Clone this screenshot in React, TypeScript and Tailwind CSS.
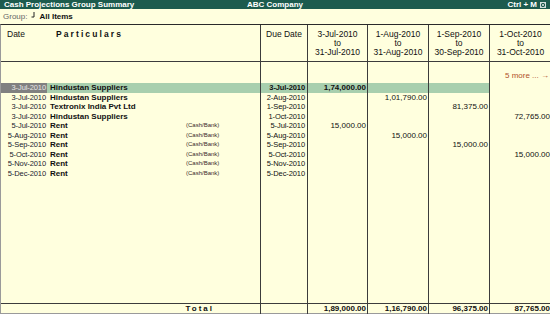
import React from "react";

const COLS = "grid grid-cols-[260px_47px_60px_61px_61px_61px]";

const periods = [
  { from: "3-Jul-2010", to: "31-Jul-2010" },
  { from: "1-Aug-2010", to: "31-Aug-2010" },
  { from: "1-Sep-2010", to: "30-Sep-2010" },
  { from: "1-Oct-2010", to: "31-Oct-2010" },
];

const rows = [
  { date: "3-Jul-2010", name: "Hindustan Suppliers", note: "", due: "3-Jul-2010", amt: ["1,74,000.00", "", "", ""], bold: true, sel: true },
  { date: "3-Jul-2010", name: "Hindustan Suppliers", note: "", due: "2-Aug-2010", amt: ["", "1,01,790.00", "", ""] },
  { date: "3-Jul-2010", name: "Textronix India Pvt Ltd", note: "", due: "1-Sep-2010", amt: ["", "", "81,375.00", ""] },
  { date: "3-Jul-2010", name: "Hindustan Suppliers", note: "", due: "1-Oct-2010", amt: ["", "", "", "72,765.00"] },
  { date: "5-Jul-2010", name: "Rent", note: "(Cash/Bank)", due: "5-Jul-2010", amt: ["15,000.00", "", "", ""] },
  { date: "5-Aug-2010", name: "Rent", note: "(Cash/Bank)", due: "5-Aug-2010", amt: ["", "15,000.00", "", ""] },
  { date: "5-Sep-2010", name: "Rent", note: "(Cash/Bank)", due: "5-Sep-2010", amt: ["", "", "15,000.00", ""] },
  { date: "5-Oct-2010", name: "Rent", note: "(Cash/Bank)", due: "5-Oct-2010", amt: ["", "", "", "15,000.00"] },
  { date: "5-Nov-2010", name: "Rent", note: "(Cash/Bank)", due: "5-Nov-2010", amt: ["", "", "", ""] },
  { date: "5-Dec-2010", name: "Rent", note: "(Cash/Bank)", due: "5-Dec-2010", amt: ["", "", "", ""] },
];

const totals = ["1,89,000.00", "1,16,790.00", "96,375.00", "87,765.00"];

const line = "border-r border-[#3c3c3c]";

export default function App() {
  return (
    <div
      className="w-[550px] h-[314px] flex flex-col bg-[#ffffde] text-[#111] overflow-hidden"
      style={{ fontFamily: '"Liberation Sans", Arial, sans-serif' }}
    >
      {/* Title bar */}
      <div className="h-[9px] bg-[#1d5b4e] text-white text-[8px] font-bold leading-[9px] grid grid-cols-[1fr_auto_1fr] px-[4px]">
        <span>Cash Projections Group Summary</span>
        <span>ABC Company</span>
        <div className="flex justify-end items-center gap-[3px]">
          <span>Ctrl + M</span>
          <span className="w-[6px] h-[6px] border border-white/80 flex items-center justify-center">
            <svg viewBox="0 0 6 6" className="w-[4px] h-[4px]">
              <path d="M0.5 0.5 L5.5 5.5 M5.5 0.5 L0.5 5.5" stroke="white" strokeWidth="1" />
            </svg>
          </span>
        </div>
      </div>

      {/* Group row */}
      <div className="h-[15px] flex items-center px-[3px] text-[8px]">
        <span className="text-[#666]">Group:</span>
        <svg viewBox="0 0 4 6" className="w-[4px] h-[6px] ml-[4px] mb-[4px]">
          <path d="M3 0 V5 H0.5" stroke="#222" strokeWidth="1" fill="none" />
        </svg>
        <span className="font-bold ml-[4px]">All Items</span>
      </div>

      {/* Table */}
      <div className="flex-1 flex flex-col border-t border-[#2a2a2a] border-l border-l-[#9a9a9a] border-b border-b-[#9a9a9a]">
        {/* Header */}
        <div className={`${COLS} h-[37px] border-b border-[#3c3c3c] text-[8.5px] leading-[9px]`}>
          <div className={`${line} flex pt-[5px] pl-[6px]`}>
            <span>Date</span>
            <span className="ml-[31px] font-bold tracking-[2.1px]">Particulars</span>
          </div>
          <div className={`${line} text-center pt-[5px]`}>Due Date</div>
          {periods.map((p, i) => (
            <div key={i} className={`${i < 3 ? line : ""} text-center pt-[5px] flex flex-col`}>
              <span>{p.from}</span>
              <span>to</span>
              <span>{p.to}</span>
            </div>
          ))}
        </div>

        {/* Body */}
        <div className="flex-1 flex flex-col">
          <div className={`${COLS} h-[21px]`}>
            <div className={line} />
            <div className={line} />
            <div className={line} />
            <div className={line} />
            <div className={line} />
            <div className="flex items-end justify-end pb-[1px] pr-[2px] text-[8px] text-[#b0522a]">
              5 more ... →
            </div>
          </div>

          {rows.map((r, ri) => {
            const bg = r.sel ? "bg-[#a8cfae]" : "";
            return (
              <div key={ri} className={`${COLS} h-[9.5px] text-[8px] leading-[9.5px]`}>
                <div className={`${line} ${bg} flex whitespace-nowrap`}>
                  <span
                    className={`w-[46px] text-right pr-[1px] text-[7.5px] tracking-[-0.1px] ${
                      r.sel ? "bg-[#808080] text-[#e6e6e6]" : "text-[#1b1b2e]"
                    }`}
                  >
                    {r.date}
                  </span>
                  <span className="w-[139px] pl-[3px] font-bold">{r.name}</span>
                  <span className="text-[6px] text-[#3a2a2a]">{r.note}</span>
                </div>
                <div className={`${line} ${bg} text-right pr-[2px] text-[7.5px] tracking-[-0.1px] ${r.bold ? "font-bold" : ""}`}>
                  {r.due}
                </div>
                {r.amt.map((a, ai) => (
                  <div
                    key={ai}
                    className={`${ai < 3 ? line : ""} ${ai < 3 ? bg : ""} text-right pr-[1px] ${
                      r.bold ? "font-bold" : ""
                    }`}
                  >
                    {a}
                  </div>
                ))}
              </div>
            );
          })}

          <div className={`${COLS} flex-1`}>
            <div className={line} />
            <div className={line} />
            <div className={line} />
            <div className={line} />
            <div className={line} />
            <div />
          </div>
        </div>

        {/* Total */}
        <div className={`${COLS} h-[10px] border-t border-[#3c3c3c] text-[8px] leading-[10px] font-bold`}>
          <div className={`${line} text-right pr-[46px] tracking-[2px]`}>Total</div>
          <div className={line} />
          {totals.map((t, i) => (
            <div key={i} className={`${i < 3 ? line : ""} text-right pr-[1px]`}>
              {t}
            </div>
          ))}
        </div>
      </div>
    </div>
  );
}
